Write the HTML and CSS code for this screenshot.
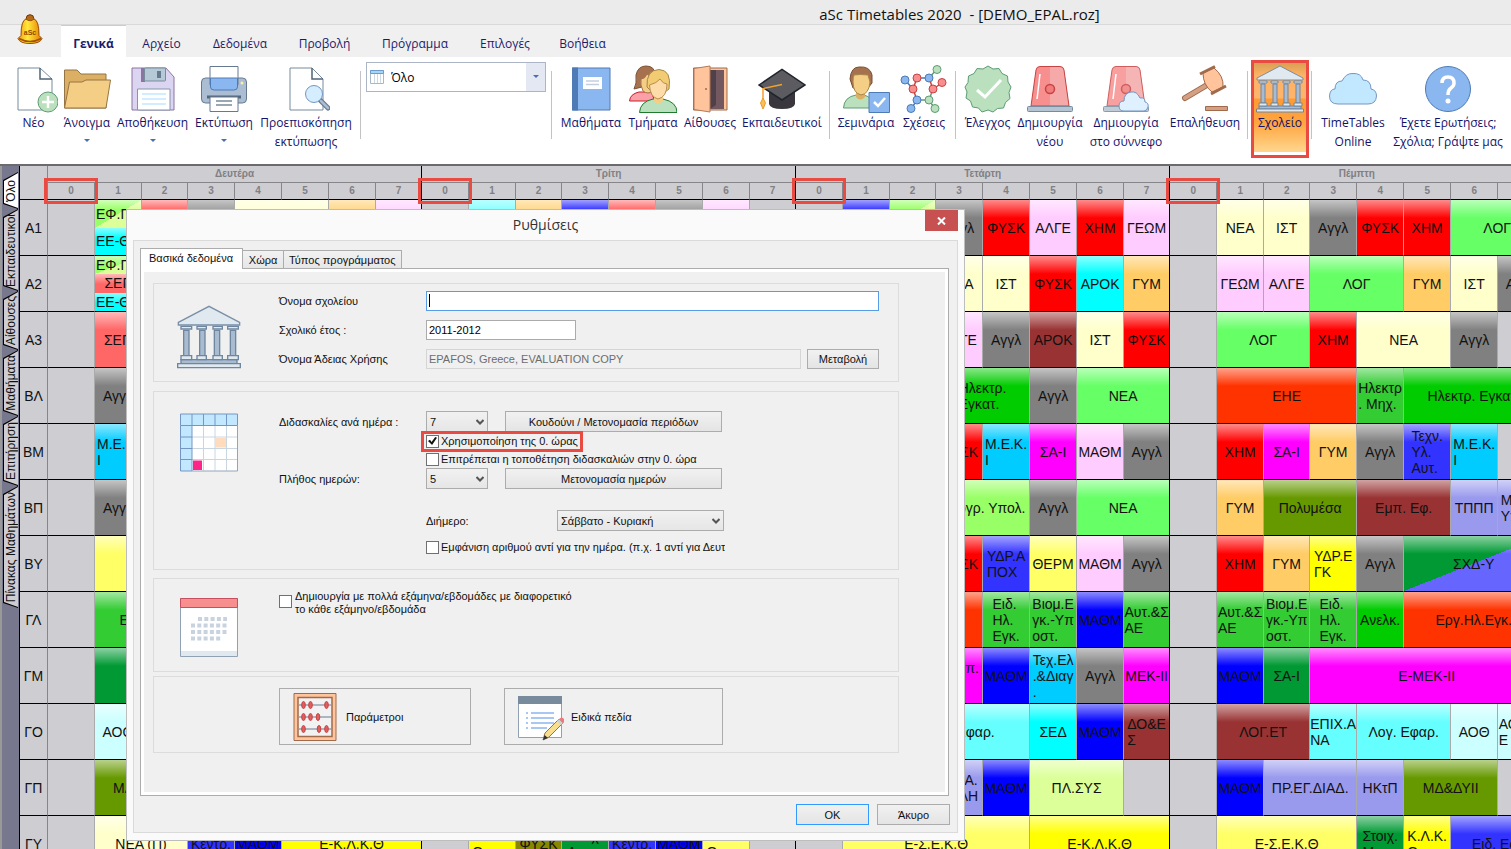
FILE: index.html
```html
<!DOCTYPE html>
<html lang="el">
<head>
<meta charset="utf-8">
<title>aSc Timetables 2020 - [DEMO_EPAL.roz]</title>
<link rel="stylesheet" href="styles.css">
</head>
<body>
<svg width="0" height="0" class="defs" aria-hidden="true">
  <defs>
    <symbol id="i-school" viewBox="0 0 48 48">
      <path d="M1 13 24 1 47 13V15H1Z" fill="#dfe9ef" stroke="#7a8fa6"/>
      <g fill="#a9bbcf" stroke="#6f86a0"><path d="M5 19H9V38H5ZM17 19H21V38H17ZM28 19H32V38H28ZM40 19H44V38H40Z"/><path d="M3 41H45V44H3Z"/></g>
      <g fill="#dfe9ef" stroke="#6f86a0"><path d="M3 16H11V18H3ZM15 16H22V18H15ZM27 16H34V18H27ZM38 16H46V18H38ZM3 38H11V41H3ZM15 38H22V41H15ZM27 38H34V41H27ZM38 38H46V41H38Z"/><path d="M.5 44H47.500V47H.5Z"/></g>
    </symbol>
    <symbol id="i-siren" viewBox="0 0 48 48">
      <path d="M5 41 10 5Q10.500 1.500 14 1.500H34Q37.500 1.500 38 5L43 41Z" fill="#f78f8f"/>
      <path d="M24 1.500H34Q37.500 1.500 38 5L43 41H24Z" fill="#f5a9a9"/>
      <path d="M5 41 10 5Q10.500 1.500 14 1.500H34Q37.500 1.500 38 5L43 41Z" fill="none" stroke="#c74343"/>
      <path d="M14 9 11 34" stroke="#fff" stroke-width="1.500"/>
      <circle cx="24" cy="24" r="4.500" fill="#f07c7c" stroke="#c74343" stroke-width="1.500"/>
      <rect x="1.500" y="41.500" width="45" height="5" rx="1" fill="#b5c4d2" stroke="#788b9c"/>
    </symbol>
    <symbol id="i-chev" viewBox="0 0 8 6"><path d="M.5 1 4 4.500 7.500 1" fill="none" stroke="#555" stroke-width="2"/></symbol>
  </defs>
</svg>

<header class="top">
  <div class="titlebar"><h1>aSc Timetables 2020 &nbsp;- [DEMO_EPAL.roz]</h1></div>
  <svg class="bell" viewBox="0 0 26 30">
    <defs><linearGradient id="gold"><stop offset="0" stop-color="#ef9a10"/><stop offset=".4" stop-color="#ffe93a"/><stop offset="1" stop-color="#e87a00"/></linearGradient></defs>
    <circle cx="13" cy="4" r="3.800" fill="#b46a16" stroke="#6c3606"/>
    <path d="M4 21Q4 6 9 4.500 13 8 17 4.500 22 6 22 21L25 24Q23 29 13 29T1 24Z" fill="url(#gold)" stroke="#9c4c04"/>
    <path d="M2 24Q13 30 24 24" fill="none" stroke="#a34f00" stroke-width="1.500"/>
    <text x="13" y="20" text-anchor="middle" class="bell-text">aSc</text>
  </svg>
  <nav class="menu">
    <button class="on">Γενικά</button><button>Αρχείο</button><button>Δεδομένα</button><button>Προβολή</button><button>Πρόγραμμα</button><button>Επιλογές</button><button>Βοήθεια</button>
  </nav>
</header>

<div class="ribbon" role="toolbar">
  <button><svg viewBox="0 0 48 48"><path d="M8 3H30L42 14V45H8Z" fill="#fff" stroke="#788b9c"/><path d="M30 3V14H42" fill="none" stroke="#4f6478" stroke-width="1.500"/><circle cx="38" cy="37" r="10" fill="#bae0bd" stroke="#5e9c76"/><path d="M38 31V43M32 37H44" stroke="#fff" stroke-width="2.500"/></svg><span>Νέο</span></button>
  <button><svg viewBox="0 0 48 48"><path d="M1.500 43V5H14L18 9H43V43Z" fill="#dbb065" stroke="#967444"/><path d="M1.500 43 6.500 17H19L23 15H47.500L43 43Z" fill="#f5ce85" stroke="#967444"/></svg><span>Άνοιγμα</span><i class="drop"></i></button>
  <button><svg viewBox="0 0 48 48"><path d="M3 3H37L45 12V45H3Z" fill="#dcd5f2" stroke="#8b75a1"/><path d="M12 3H16V17H12Z" fill="#8b75a1"/><rect x="15.500" y="3" width="21" height="13" rx="1" fill="#b6c9d6" stroke="#788b9c"/><path d="M28 6H32V13H28Z" fill="#66798f"/><path d="M8.500 24H41V45H8.500Z" fill="#fff" stroke="#8496a8"/><path d="M13 29H37M13 34H37M13 39H37" stroke="#c2e8ff" stroke-width="1.500"/></svg><span>Αποθήκευση</span><i class="drop"></i></button>
  <button><svg viewBox="0 0 48 48"><rect x="1.500" y="13" width="45" height="25" rx="4" fill="#aabdd2" stroke="#66798f"/><path d="M10 1.500H38V20H10Z" fill="#fff" stroke="#66798f"/><path d="M10.500 13H37.500V22Q37.500 25 34 25H14Q10.500 25 10.500 22Z" fill="#8bb7f0" stroke="#4e7ab5"/><circle cx="42" cy="18" r="1.500" fill="#ffeea3"/><path d="M7 32H41" stroke="#55677a" stroke-width="3"/><path d="M10 32H38V46.500H10Z" fill="#fff" stroke="#66798f"/><path d="M16 36H32M16 40H32" stroke="#788b9c" stroke-width="1.500"/></svg><span>Εκτύπωση</span><i class="drop"></i></button>
  <button><svg viewBox="0 0 48 48"><path d="M8 3H30L41 14V45H8Z" fill="#fff" stroke="#788b9c"/><path d="M30 3V14H41" fill="none" stroke="#4f6478" stroke-width="1.500"/><path d="M38 35 46 43" stroke="#66798f" stroke-width="5" stroke-linecap="round"/><path d="M39 36 46 43" stroke="#aabdd2" stroke-width="2.500" stroke-linecap="round"/><circle cx="32" cy="29" r="8.500" fill="#d4edff" stroke="#7496c4"/></svg><span>Προεπισκόπηση<br>εκτύπωσης</span></button>
  <i class="sep"></i>
  <div class="combo"><svg class="combo-ico" viewBox="0 0 14 14"><path d="M.5.5H13.500V13.500H.5Z" fill="#fff" stroke="#a9b8c8"/><path d="M.5.5H13.500V3.500H.5Z" fill="#a8d4f5" stroke="#6d9ccc"/><path d="M4.500 4V13M7.500 4V13M10.500 4V13" stroke="#ccd8e4"/></svg><select aria-label="Προβολή"><option>Όλο</option></select><i class="drop"></i></div>
  <i class="sep"></i>
  <button><svg viewBox="0 0 48 48"><path d="M5.500 3H43V45H5.500Z" fill="#8bb7f0" stroke="#4e7ab5"/><path d="M5 2.500H11V45.500H5Z" fill="#4e7ab5"/><path d="M16 12H35V24H16Z" fill="#fff"/><path d="M19 16H32M19 19.500H32" stroke="#c3cfe0" stroke-width="1.500"/></svg><span>Μαθήματα</span></button>
  <button><svg viewBox="0 0 48 48"><path d="M.5 36Q1 29 10 27H22L26 36Z" fill="#faa0a6" stroke="#c8202c"/><path d="M5 24Q8 19 7 10 9 1 17 1 26 1 26 10L22 25 13 22Z" fill="#a6714e" stroke="#7d5136"/><path d="M12 14Q16 14 18 9L24 14V26Q19 30 14 26Q11 20 12 14Z" fill="#f5ce85" stroke="#a6714e"/><path d="M10.500 47.500Q11 37 24 34H34Q48 37 48 47.500Z" fill="#bae0bd" stroke="#1f7a2e"/><path d="M25 30H34V36Q29 41 25 36Z" fill="#f5ce85"/><path d="M18 22Q17 5 30 4.500 43 5 40 24L36 27H23Z" fill="#f2cc72" stroke="#a6854a"/><path d="M20.500 20Q28 18 31 14 34 19 38 19 38 32 29 34 21 32 20.500 20Z" fill="#fddcaa" stroke="#b88e50"/></svg><span>Τμήματα</span></button>
  <button><svg viewBox="0 0 48 48"><path d="M7.500 3H41V45H7.500Z" fill="#ffc49c" stroke="#a16a4a"/><path d="M24 5H38V44H24Z" fill="#73595f"/><path d="M24 5H30V40L24 44Z" fill="#50404a"/><path d="M8 3.500 24 1V47L8 44.500Z" fill="#ffc49c" stroke="#b57a58"/><circle cx="20" cy="24" r="1" fill="#a16a4a"/></svg><span>Αίθουσες</span></button>
  <button><svg viewBox="0 0 48 48"><path d="M11 25H37V39Q36 44 24 44T11 39Z" fill="#39373d"/><path d="M1 20 24 4.500 47 20 24 35Z" fill="#5c5c60" stroke="#20242e" stroke-width="1.500"/><path d="M24 19.500 5 23.500V34" fill="none" stroke="#f5a02a" stroke-width="1.500"/><path d="M5 33 7.500 38 5 44 2.500 38Z" fill="#f9c15c" stroke="#ef9a22"/></svg><span>Εκπαιδευτικοί</span></button>
  <i class="sep"></i>
  <button><svg viewBox="0 0 48 48"><path d="M1.500 43Q2 32 14 30H22Q31 32 31 43Z" fill="#bae0bd" stroke="#5e9c76"/><path d="M14 26H23V32Q18 37 14 32Z" fill="#dbb065"/><path d="M8 14Q9 2 17 2 28 1 30 10V18L26 23H11Z" fill="#a6714e" stroke="#7a4f34"/><path d="M11 17Q11 12 12 10 18 9 26 10L28 17Q27 29 19 30 11 28 11 17Z" fill="#f5ce85" stroke="#a6854a"/><path d="M27 27.500H47.500V47.500H27Z" fill="#8bb7f0" stroke="#4e7ab5"/><path d="M32 37 36 41 43 33" fill="none" stroke="#fff" stroke-width="2.500"/></svg><span>Σεμινάρια</span></button>
  <button><svg viewBox="0 0 48 48"><g fill="none" stroke-width="1.500"><path d="M17 13 13 24 17 35M33 24 42 18M33 24 29 13" stroke="#c74343"/><path d="M17 13H29M5 15 13 24M17 35 11 44" stroke="#4e7ab5"/><path d="M29 13 37 4M17 35H29L33 24M29 35 35 44" stroke="#5e9c76"/></g><g fill="#f78f8f" stroke="#c74343"><circle cx="17" cy="13" r="4"/><circle cx="13" cy="24" r="4"/><circle cx="33" cy="24" r="4"/><circle cx="42" cy="17.500" r="4"/></g><g fill="#8bb7f0" stroke="#4e7ab5"><circle cx="5" cy="15" r="4"/><circle cx="29" cy="13" r="4"/><circle cx="17" cy="35" r="4"/><circle cx="11" cy="43.500" r="4"/></g><g fill="#bae0bd" stroke="#5e9c76"><circle cx="37" cy="4.500" r="4"/><circle cx="29" cy="35" r="4"/><circle cx="35" cy="43.500" r="4"/></g></svg><span>Σχέσεις</span></button>
  <i class="sep"></i>
  <button><svg viewBox="0 0 48 48"><path d="M24 1 29 4 35 3.500 38 8.500 43.500 11 44 17 47 22 45 27.500 46 33.500 41.500 37.500 39.500 43 33.500 43.500 29 47 24 45 18 47 14.500 43 8.500 42 6.500 36 2 33 3 27 1 22 4 17.500 4.500 11 10 8.500 13 3.500 19 4Z" fill="#bae0bd" stroke="#5e9c76"/><path d="M13 25 21 32 37 15" fill="none" stroke="#fff" stroke-width="3"/></svg><span>Έλεγχος</span></button>
  <button><svg viewBox="0 0 48 48"><use href="#i-siren"/></svg><span>Δημιουργία<br>νέου</span></button>
  <button><svg viewBox="0 0 48 48"><use href="#i-siren" opacity=".85"/><path d="M22 46Q17 46 17 41T22 36Q22 28 29 27 35 26 38 33 43 32 43 37 47 38 46 42 45 46 42 46Z" fill="#dff0fe" stroke="#7496c4"/></svg><span>Δημιουργία<br>στο σύννεφο</span></button>
  <button><svg viewBox="0 0 48 48"><path d="M4 33 26 20" stroke="#a16a4a" stroke-width="6" stroke-linecap="round"/><path d="M4 33 26 20" stroke="#d3a084" stroke-width="4" stroke-linecap="round"/><path d="M22 8 33 3Q43 11 42 22L31 27Q22 20 22 8Z" fill="#ffc49c" stroke="#a16a4a"/><path d="M19 9 34 1.500M30 29 45 21" stroke="#a16a4a" stroke-width="3"/><path d="M24.500 41.500H46.500V45.500H24.500Z" fill="#d3a084" stroke="#a16a4a"/></svg><span>Επαλήθευση</span></button>
  <i class="sep"></i>
  <button class="active"><svg viewBox="0 0 48 48"><use href="#i-school"/></svg><span>Σχολείο</span></button>
  <i class="sep"></i>
  <button><svg viewBox="0 0 48 48"><path d="M9 39Q.5 39 .5 31 1 24 6 24 6 16 13 16 17 8 24 8.500 32 8 34 15 42 15 42 24 47.500 25 47.500 31 47 39 39 39Z" fill="#c2e8ff" stroke="#7496c4"/></svg><span>TimeTables<br>Online</span></button>
  <button><svg viewBox="0 0 48 48"><circle cx="24" cy="24" r="22.500" fill="#8bb7f0" stroke="#4e7ab5"/><path d="M18 18Q18 12 24 12T30 18Q30 21 27 23T24 30" fill="none" stroke="#fff" stroke-width="3.500"/><circle cx="24" cy="36" r="2.500" fill="#fff"/></svg><span>Έχετε Ερωτήσεις;<br>Σχόλια; Γράψτε μας</span></button>
</div>

<main class="work">
  <nav class="side">
    <button class="t1 on"><span>Όλο</span></button><button class="t2"><span>Εκπαιδευτικοί</span></button><button class="t3"><span>Αίθουσες</span></button><button class="t4"><span>Μαθήματα</span></button><button class="t5"><span>Επιτήρηση</span></button><button class="t6"><span>Πίνακας Μαθημάτων</span></button>
  </nav>
  <div class="grid-wrap">
  <table class="tt">
    <colgroup><col class="h"><col><col><col class="n"><col><col><col><col><col class="n"><col><col><col class="n"><col><col><col><col><col class="n"><col><col><col class="n"><col><col><col><col><col class="n"><col><col><col class="n"><col><col><col><col><col class="n"></colgroup>
    <thead>
      <tr><th rowspan="2"></th><th colspan="8" class="e">Δευτέρα</th><th colspan="8" class="e">Τρίτη</th><th colspan="8" class="e">Τετάρτη</th><th colspan="8" class="e">Πέμπτη</th></tr>
      <tr><th class="z">0</th><th>1</th><th>2</th><th>3</th><th>4</th><th>5</th><th>6</th><th class="e">7</th><th class="z">0</th><th>1</th><th>2</th><th>3</th><th>4</th><th>5</th><th>6</th><th class="e">7</th><th class="z">0</th><th>1</th><th>2</th><th>3</th><th>4</th><th>5</th><th>6</th><th class="e">7</th><th class="z">0</th><th>1</th><th>2</th><th>3</th><th>4</th><th>5</th><th>6</th><th class="e"></th></tr>
    </thead>
    <tbody>
      <tr><th>Α1</th><td></td><td><div class="stack"><b class="duo">ΕΦ.ΓΛ</b><b class="cyan">ΕΕ-Θ</b></div></td><td><div class="stack"><b class="coral mid">ΣΕΠ</b><b class="coral"></b></div></td><td class="gray"></td><td colspan="2" class="cream"></td><td class="orange"></td><td class="pink e"></td>
        <td></td><td class="aqua"></td><td class="orange"></td><td><div class="stack"><b class="indigo mid">ΕΠ</b><b class="indigo"></b></div></td><td><div class="stack"><b class="coral mid">ΣΕΠ</b><b class="coral"></b></div></td><td class="gray"></td><td class="pink"></td><td class="e"></td>
        <td></td><td><div class="stack"><b class="indigo mid">ΕΠ</b><b class="indigo"></b></div></td><td><div class="stack"><b class="duo">ΕΦ.ΓΛ</b><b class="cyan"></b></div></td><td class="gray">Αγγλ</td><td class="red">ΦΥΣΚ</td><td class="pink">ΑΛΓΕ</td><td class="red">ΧΗΜ</td><td class="pink e">ΓΕΩΜ</td>
        <td></td><td class="cream">ΝΕΑ</td><td class="cream">ΙΣΤ</td><td class="gray">Αγγλ</td><td class="red">ΦΥΣΚ</td><td class="red">ΧΗΜ</td><td colspan="2" class="lime e">ΛΟΓ</td></tr>
      <tr><th>Α2</th><td></td><td><div class="stack"><b class="duo">ΕΦ.ΓΛ</b><b class="coral mid">ΣΕΠ</b><b class="cyan">ΕΕ-Θ</b></div></td><td colspan="6" class="e"></td><td colspan="8" class="e"></td>
        <td></td><td></td><td></td><td class="cream">ΝΕΑ</td><td class="cream">ΙΣΤ</td><td class="red">ΦΥΣΚ</td><td class="cyan">ΑΡΟΚ</td><td class="orange e">ΓΥΜ</td>
        <td></td><td class="pink">ΓΕΩΜ</td><td class="pink">ΑΛΓΕ</td><td colspan="2" class="lime">ΛΟΓ</td><td class="orange">ΓΥΜ</td><td class="cream">ΙΣΤ</td><td class="gray e">Αγγλ</td></tr>
      <tr><th>Α3</th><td></td><td class="coral">ΣΕΠ</td><td colspan="6" class="e"></td><td colspan="8" class="e"></td>
        <td></td><td></td><td></td><td class="pink">ΑΛΓΕ</td><td class="gray">Αγγλ</td><td class="brown">ΑΡΟΚ</td><td class="cream">ΙΣΤ</td><td class="red e">ΦΥΣΚ</td>
        <td></td><td colspan="2" class="lime">ΛΟΓ</td><td class="red">ΧΗΜ</td><td colspan="2" class="cream">ΝΕΑ</td><td class="gray">Αγγλ</td><td class="e"></td></tr>
      <tr><th>ΒΛ</th><td></td><td class="gray">Αγγλ</td><td colspan="6" class="e"></td><td colspan="8" class="e"></td>
        <td></td><td></td><td></td><td colspan="2" class="green"><span>Ηλεκτρ.<br>Εγκατ.</span></td><td class="gray">Αγγλ</td><td colspan="2" class="lime e">ΝΕΑ</td>
        <td></td><td colspan="3" class="fire">ΕΗΕ</td><td class="kelly"><span>Ηλεκτρ<br>. Μηχ.</span></td><td colspan="3" class="green e">Ηλεκτρ. Εγκατ.</td></tr>
      <tr><th>ΒΜ</th><td></td><td class="sky"><span>Μ.Ε.Κ.<br>Ι</span></td><td colspan="6" class="e"></td><td colspan="8" class="e"></td>
        <td></td><td></td><td></td><td class="red">ΦΥΣΚ</td><td class="sky"><span>Μ.Ε.Κ.<br>Ι</span></td><td class="magenta">ΣΑ-Ι</td><td class="pink">ΜΑΘΜ</td><td class="gray e">Αγγλ</td>
        <td></td><td class="red">ΧΗΜ</td><td class="magenta">ΣΑ-Ι</td><td class="orange">ΓΥΜ</td><td class="gray">Αγγλ</td><td class="indigo"><span>Τεχν.<br>Υλ.<br>Αυτ.</span></td><td class="sky"><span>Μ.Ε.Κ.<br>Ι</span></td><td class="e"></td></tr>
      <tr><th>ΒΠ</th><td></td><td class="gray">Αγγλ</td><td colspan="6" class="e"></td><td colspan="8" class="e"></td>
        <td></td><td></td><td></td><td colspan="2" class="apple">Προγρ. Υπολ.</td><td class="gray">Αγγλ</td><td colspan="2" class="lime e">ΝΕΑ</td>
        <td></td><td class="orange">ΓΥΜ</td><td colspan="2" class="olive">Πολυμέσα</td><td colspan="2" class="brown">Εμπ. Εφ.</td><td class="lav">ΤΠΠΠ</td><td class="lav e"><span>Μηχ.Ε<br>Υπολ.</span></td></tr>
      <tr><th>ΒΥ</th><td></td><td colspan="2" class="lemon"></td><td colspan="5" class="e"></td><td colspan="8" class="e"></td>
        <td></td><td></td><td></td><td class="red">ΦΥΣΚ</td><td class="indigo"><span>ΥΔΡ.Α<br>ΠΟΧ</span></td><td class="lemon">ΘΕΡΜ</td><td class="pink">ΜΑΘΜ</td><td class="gray e">Αγγλ</td>
        <td></td><td class="red">ΧΗΜ</td><td class="orange">ΓΥΜ</td><td class="yellow"><span>ΥΔΡ.Ε<br>ΓΚ</span></td><td class="gray">Αγγλ</td><td colspan="3" class="half e">ΣΧΔ-Υ</td></tr>
      <tr><th>ΓΛ</th><td></td><td colspan="2" class="kelly">Ε-ΗΕΚ</td><td colspan="5" class="e"></td><td colspan="8" class="e"></td>
        <td></td><td></td><td colspan="2" class="fire"></td><td class="kelly"><span>Ειδ.<br>Ηλ.<br>Εγκ.</span></td><td class="kelly"><span>Βιομ.Ε<br>γκ.-Υπ<br>οστ.</span></td><td class="blue">ΜΑΘΜ</td><td class="kelly e"><span>Αυτ.&amp;Σ<br>ΑΕ</span></td>
        <td></td><td class="kelly"><span>Αυτ.&amp;Σ<br>ΑΕ</span></td><td class="kelly"><span>Βιομ.Ε<br>γκ.-Υπ<br>οστ.</span></td><td class="kelly"><span>Ειδ.<br>Ηλ.<br>Εγκ.</span></td><td class="green">Ανελκ.</td><td colspan="3" class="fire e">Εργ.Ηλ.Εγκ.</td></tr>
      <tr><th>ΓΜ</th><td></td><td colspan="2" class="forest"></td><td colspan="5" class="e"></td><td colspan="8" class="e"></td>
        <td></td><td></td><td></td><td class="magenta"><span>Εφ.Ιπ.<br>&nbsp;</span></td><td class="blue">ΜΑΘΜ</td><td class="sky"><span>Τεχ.Ελ<br>.&amp;Διαγ<br>.</span></td><td class="gray">Αγγλ</td><td class="magenta e">ΜΕΚ-ΙΙ</td>
        <td></td><td class="blue">ΜΑΘΜ</td><td class="forest">ΣΑ-Ι</td><td colspan="5" class="magenta e">Ε-ΜΕΚ-ΙΙ</td></tr>
      <tr><th>ΓΟ</th><td></td><td class="ice">ΑΟΘ</td><td colspan="6" class="e"></td><td colspan="8" class="e"></td>
        <td></td><td></td><td colspan="3" class="aqua">Λογ. Εφαρ.</td><td class="cyan">ΣΕΔ</td><td class="blue">ΜΑΘΜ</td><td class="brown e"><span>ΔΟ&amp;Ε<br>Σ</span></td>
        <td></td><td colspan="2" class="brown">ΛΟΓ.ΕΤ</td><td class="aqua"><span>ΕΠΙΧ.Α<br>ΝΑ</span></td><td colspan="2" class="aqua">Λογ. Εφαρ.</td><td class="ice">ΑΟΘ</td><td class="ice e"><span>ΑΟΘ.Ε<br>Ε</span></td></tr>
      <tr><th>ΓΠ</th><td></td><td colspan="2" class="olive">ΜΔ&amp;ΔΥΙΙ</td><td colspan="5" class="e"></td><td colspan="8" class="e"></td>
        <td></td><td></td><td></td><td class="lav"><span>ΕΦ.Α.<br>ΕΛΛΗ</span></td><td class="blue">ΜΑΘΜ</td><td colspan="2" class="pear">ΠΛ.ΣΥΣ</td><td class="e"></td>
        <td></td><td class="blue">ΜΑΘΜ</td><td colspan="2" class="lav">ΠΡ.ΕΓ.ΔΙΑΔ.</td><td class="lav">ΗΚτΠ</td><td colspan="2" class="olive">ΜΔ&amp;ΔΥΙΙ</td><td class="e"></td></tr>
      <tr><th>ΓΥ</th><td></td><td colspan="2" class="cream">ΝΕΑ (Π)</td><td class="indigo">Κεντρ.</td><td class="blue">ΜΑΘΜ</td><td colspan="3" class="yellow e">Ε-Κ.Λ.Κ.Θ</td>
        <td></td><td class="yellow"><span>Κ.Λ.Κ.<br>Θ</span></td><td class="khaki">ΦΥΣΚ</td><td class="forest"><span>Στοιχ.<br>Λ</span></td><td class="indigo">Κεντρ.</td><td class="blue">ΜΑΘΜ</td><td class="lemon"><span>Σ.Ε.Κ.<br>Θ</span></td><td class="e"></td>
        <td></td><td colspan="4" class="lemon">Ε-Σ.Ε.Κ.Θ</td><td colspan="3" class="yellow e">Ε-Κ.Λ.Κ.Θ</td>
        <td></td><td colspan="3" class="lemon">Ε-Σ.Ε.Κ.Θ</td><td class="forest"><span>Στοιχ.<br>Μηχ.</span></td><td class="yellow"><span>Κ.Λ.Κ.<br>Θ</span></td><td colspan="2" class="indigo e">Ειδ. Εφ.</td></tr>
    </tbody>
  </table>
  </div>
</main>

<section class="dialog" role="dialog" aria-labelledby="dlg-title">
  <header class="dlg-head"><h2 id="dlg-title">Ρυθμίσεις</h2><button class="close" aria-label="Κλείσιμο"><svg viewBox="0 0 9 8"><path d="M1 .5 8 7.500M8 .5 1 7.500" stroke="#fff" stroke-width="2"/></svg></button></header>
  <div class="dlg-body">
    <div class="tabs" role="tablist"><button role="tab" class="on">Βασικά δεδομένα</button><button role="tab">Χώρα</button><button role="tab">Τύπος προγράμματος</button></div>
    <div class="pane">
      <fieldset class="g1">
        <svg class="ico big" viewBox="0 0 48 48"><use href="#i-school"/></svg>
        <div class="rows">
          <div class="row"><label for="f1">Όνομα σχολείου</label><span class="field caret"><input id="f1" type="text" class="focus"></span></div>
          <div class="row"><label for="f2">Σχολικό έτος :</label><input id="f2" type="text" class="short" value="2011-2012"></div>
          <div class="row"><label for="f3">Όνομα Άδειας Χρήσης</label><span class="field"><input id="f3" type="text" disabled value="EPAFOS, Greece, EVALUATION COPY"><button class="btn">Μεταβολή</button></span></div>
        </div>
      </fieldset>
      <fieldset class="g2">
        <svg class="ico" viewBox="0 0 58 58"><path d="M.5.5H57.500V57.500H.5Z" fill="#fff"/><path d="M.5.5H57.500V12H12V57.500H.5Z" fill="#c2e8ff"/><path d="M35.500 24.500H46V34H35.500Z" fill="#ffdcbe"/><path d="M13 47H22V56.500H13Z" fill="#ff2487"/><path d="M23.500 12V57M35 12V57M46.500 12V57M12 23.500H57M12 35H57M12 46H57" stroke="#c9d6e2"/><path d="M.5.5H57.500V12H.5ZM.5 12V57.500H12V.5M23.500.5V12M35 .5V12M46.500.5V12M.5 23.500H12M.5 35H12M.5 46H12" fill="none" stroke="#7496c4"/><path d="M57.500 12V57.500H12" fill="none" stroke="#93a5b8"/></svg>
        <div class="rows">
          <div class="row"><label for="s1">Διδασκαλίες ανά ημέρα :</label><span class="field wide"><span class="sel"><select id="s1"><option>7</option></select><svg><use href="#i-chev"/></svg></span><button class="btn">Κουδούνι / Μετονομασία περιόδων</button></span></div>
          <div class="check"><label class="marked"><input type="checkbox" checked>Χρησιμοποίηση της 0. ώρας</label></div>
          <div class="check"><label><input type="checkbox">Επιτρέπεται η τοποθέτηση διδασκαλιών στην 0. ώρα</label></div>
          <div class="row"><label for="s2">Πλήθος ημερών:</label><span class="field wide"><span class="sel"><select id="s2"><option>5</option></select><svg><use href="#i-chev"/></svg></span><button class="btn">Μετονομασία ημερών</button></span></div>
          <div class="row weekend"><i></i><span class="field"><label for="s3">Διήμερο:</label><span class="sel long"><select id="s3"><option>Σάββατο - Κυριακή</option></select><svg><use href="#i-chev"/></svg></span></span></div>
          <div class="check clip"><label><input type="checkbox">Εμφάνιση αριθμού αντί για την ημέρα. (π.χ. 1 αντί για Δευτ</label></div>
        </div>
      </fieldset>
      <fieldset class="g3">
        <svg class="ico" viewBox="0 0 58 59"><path d="M.5.5H57.500V58.500H.5Z" fill="#fff" stroke="#8fa1b3"/><path d="M1 53H57V58H1Z" fill="#dfe9ef"/><path d="M.5.5H57.500V9.500H.5Z" fill="#f78f8f" stroke="#c75060"/><g stroke="#c8d3df" stroke-width="4" stroke-dasharray="4 2.300"><path d="M18 21H47M11 27.500H47M11 34H47M11 40.500H41"/></g></svg>
        <label class="multi"><input type="checkbox"><span>Δημιουργία με πολλά εξάμηνα/εβδομάδες με διαφορετικό<br>το κάθε εξάμηνο/εβδομάδα</span></label>
      </fieldset>
      <fieldset class="g4">
        <button class="tile"><svg viewBox="0 0 48 48"><path d="M3 .5H45V47.500H3Z" fill="#ffc49c" stroke="#a16a4a"/><path d="M7 4.500H41V43.500H7Z" fill="#f2f2f2" stroke="#a16a4a" stroke-width="1.500"/><path d="M8 12H40M8 24H40M8 36H40" stroke="#66798f"/><g fill="#e05f5f" stroke="#c74343"><ellipse cx="12.500" cy="12" rx="1.800" ry="3.500"/><ellipse cx="19.500" cy="12" rx="1.800" ry="3.500"/><ellipse cx="35.500" cy="12" rx="1.800" ry="3.500"/><ellipse cx="12.500" cy="24" rx="1.800" ry="3.500"/><ellipse cx="19.500" cy="24" rx="1.800" ry="3.500"/><ellipse cx="27" cy="24" rx="1.800" ry="3.500"/><ellipse cx="12.500" cy="36" rx="1.800" ry="3.500"/><ellipse cx="28" cy="36" rx="1.800" ry="3.500"/><ellipse cx="35.500" cy="36" rx="1.800" ry="3.500"/></g></svg><span>Παράμετροι</span></button>
        <button class="tile wide"><svg viewBox="0 0 48 48"><path d="M2.500 3.500H45.500V44.500H2.500Z" fill="#fff" stroke="#8fa1b3"/><path d="M2 3H46V11H2Z" fill="#788b9c"/><path d="M10 20H12M10 25H12M10 30H12M10 35H12M15 20H38M15 25H38M15 30H38M15 35H31" stroke="#8bb7f0" stroke-width="1.500"/><path d="M27 47 29 40 43 26 47 30 33 44Z" fill="#f7df8e" stroke="#967444"/><path d="M27 47 28.500 42 32 45Z" fill="#333"/><path d="M41 28 43 26 47 30 45 32Z" fill="#c5d4e3"/><path d="M43 26Q46 23 48 26T47 30Z" fill="#f07878"/></svg><span>Ειδικά πεδία</span></button>
      </fieldset>
    </div>
    <footer class="dlg-foot"><button class="btn ok">OK</button><button class="btn">Άκυρο</button></footer>
  </div>
</section>
</body>
</html>
```
FILE: styles.css
```css
* { box-sizing: border-box; }
html, body { height: 100%; }
body { margin: 0; display: flex; flex-direction: column; position: relative; overflow: hidden; background: #cecdd2; font-family: "Liberation Sans", Arial, sans-serif; font-size: 11px; color: #111; }
button { font: inherit; color: inherit; border: 0; padding: 0; background: none; }
h1, h2 { margin: 0; font-weight: 400; }
.defs { position: absolute; }

/* Title and menu */
.top { position: relative; flex: none; font-family: "Open Sans", "Noto Sans", sans-serif; }
.titlebar { height: 25px; background: #ebebeb; border-bottom: 1px solid #d9d9d9; padding-top: 4px; padding-left: 408px; text-align: center; }
.titlebar h1 { font-size: 15px; line-height: 20px; color: #111; }
.bell { position: absolute; left: 17px; top: 14px; width: 26px; height: 31px; }
.bell-text { font: bold 7px "Liberation Sans", sans-serif; fill: #8b4a00; }
.menu { height: 32px; background: #f0f0f0; padding-left: 61px; display: grid; grid-template-columns: 65px 71px 86px 83px 98px 82px 73px; }
.menu button { font-size: 12px; color: #1b1b6d; padding-top: 4px; }
.menu .on { background: #fff; font-weight: 700; border-top: 1px solid #ccc; }

/* Ribbon */
.ribbon { flex: none; height: 109px; background: #fff; border-bottom: 2px solid #6c6a6e; padding-left: 8px; display: grid; align-items: start; grid-template-columns: 51px 56px 75px 68px 96px 12px 180px 11px 68px 56px 58px 86px 9px 64px 52px 10px 55px 70px 82px 76px 8px 58px 5px 78px 112px; font-family: "Open Sans", "Noto Sans", sans-serif; }
.ribbon button { padding-top: 8px; display: flex; flex-direction: column; align-items: center; font-size: 12px; line-height: 19px; color: #12126b; white-space: nowrap; position: relative; }
.ribbon button svg { width: 48px; height: 48px; display: block; }
.drop { border: 3px solid transparent; border-top-color: #4a6fb0; border-bottom: 0; margin-top: 7px; }
.sep { width: 1px; height: 68px; margin-top: 14px; background: #c3c3c3; justify-self: center; }
.ribbon .active { background: linear-gradient(#d99f54 0, #fdb264 12px, #ffb46c 35px, #ff9b33 36px, #ffa53e 60px, #ffd58c 88px) 3px 6px / 52px 89px no-repeat; height: 100px; }
.ribbon .active::after { content: ""; position: absolute; inset: 3px 0 -1px 0; border: 3px solid #e94b43; }
.combo { margin-top: 5px; height: 30px; border: 1px solid #abb5c6; position: relative; display: flex; background: linear-gradient(90deg, #fff 159px, #e4e8f2 159px); }
.combo select { flex: 1; appearance: none; border: 0; background: none; font: 12px "Open Sans", sans-serif; padding-left: 24px; }
.combo-ico { position: absolute; left: 3px; top: 7px; width: 14px; height: 14px; }
.combo .drop { position: absolute; right: 6px; top: 12px; margin: 0; }

/* Work area */
.work { flex: 1; min-height: 0; display: flex; overflow: hidden; }
.side { flex: none; width: 20px; padding: 6px 1px 0 1px; background: #77778d; border-left: 2px solid #999; border-right: 1px solid #000; display: flex; flex-direction: column; }
.side button { position: relative; background: #000; clip-path: polygon(100% 0, 100% 100%, 0 calc(100% - 5px), 0 8px); display: flex; align-items: center; justify-content: center; flex: none; }
.side button::before { content: ""; position: absolute; inset: 1px 0 1px 1px; background: #cecdd2; clip-path: polygon(100% 0, 100% 100%, 0 calc(100% - 5px), 0 8px); }
.side .on::before { background: #fff; }
.side span { position: relative; writing-mode: vertical-rl; transform: rotate(180deg); font-size: 12px; line-height: 14px; white-space: nowrap; }
.t1 { height: 37px; } .t2 { height: 82px; } .t3 { height: 59px; } .t4 { height: 66px; } .t5 { height: 70px; } .t6 { height: 122px; }
.grid-wrap { flex: 1; min-width: 0; overflow: hidden; }
.tt { table-layout: fixed; width: 1524px; border-collapse: separate; border-spacing: 0; font-size: 14px; line-height: 16px; }
.tt col { width: 47px; } .tt .n { width: 46px; } .tt .h { width: 28px; }
.tt th, .tt td { padding: 0; white-space: nowrap; text-align: center; border-right: 1px solid #aaa; border-bottom: 1px solid #000; overflow: hidden; }
.tt th { font-weight: 400; border-right-color: #85858a; }
.tt thead th { height: 17px; font-size: 10px; line-height: 14px; font-weight: 700; color: #808084; border-bottom-color: #85858a; }
.tt thead tr + tr th, .tt thead th[rowspan] { border-bottom-color: #000; }
.tt td, .tt tbody th { height: 56px; }
.tt .e, .tt thead .e { border-right-color: #000; }
.tt td { background-color: #cecdd2; background-image: linear-gradient(rgba(255,255,255,.55), rgba(255,255,255,0) 18px); }
.tt td:empty { background-image: none; }
.tt td span { display: inline-block; text-align: left; }
.tt .z { position: relative; overflow: visible; }
.tt .z::after { content: ""; position: absolute; inset: -5px -4px -5px -4px; border: 3px solid #e94b43; z-index: 1; }
.stack { height: 55px; display: grid; grid-auto-rows: 1fr; }
.stack b { font-weight: 400; text-align: left; padding-left: 1px; overflow: hidden; display: flex; align-items: center; background-image: linear-gradient(rgba(255,255,255,.55), rgba(255,255,255,0) 10px); }
.stack .mid { justify-content: center; }
.stack .duo { background: linear-gradient(rgba(255,255,255,.55), rgba(255,255,255,0) 10px), linear-gradient(to bottom right, #9f6 50%, #df9 50%); }
.tt .red { background-color: #f00; } .tt .coral { background-color: #f66; } .tt .gray { background-color: #808080; }
.tt .cream { background-color: #ffc; } .tt .orange { background-color: #fc6; } .tt .pink { background-color: #fcf; }
.tt .cyan { background-color: #0ff; } .tt .blue { background-color: #00f; } .tt .brown { background-color: #933; }
.tt .lime { background-color: #6f6; } .tt .green { background-color: #0c0; } .tt .kelly { background-color: #3c3; }
.tt .forest { background-color: #093; } .tt .sky { background-color: #0cf; } .tt .magenta { background-color: #f0f; }
.tt .indigo { background-color: #33f; } .tt .lav { background-color: #99e; } .tt .olive { background-color: #690; }
.tt .yellow { background-color: #ff0; } .tt .lemon { background-color: #ff6; } .tt .aqua { background-color: #6ff; }
.tt .ice { background-color: #cff; } .tt .fire { background-color: #f30; } .tt .apple { background-color: #9f6; }
.tt .pear { background-color: #df9; } .tt .khaki { background-color: #880; }
.tt .half { background-image: linear-gradient(rgba(255,255,255,.55), rgba(255,255,255,0) 18px), linear-gradient(to bottom right, #093 50%, #66f 50%); }
.tt td[class]:not(.e):empty, .tt .pink.e { background-image: linear-gradient(rgba(255,255,255,.55), rgba(255,255,255,0) 18px); }

/* Dialog */
.dialog { position: absolute; left: 126px; top: 209px; width: 839px; padding: 0 6px 7px; background: #fafafa; border: 1px solid #bdbdbd; z-index: 2; }
.dlg-head { height: 30px; display: flex; align-items: flex-start; }
.dlg-head h2 { flex: 1; padding-left: 33px; text-align: center; font: 14px/30px "Open Sans", "Noto Sans", sans-serif; color: #333; }
.close { width: 33px; height: 21px; background: #c75050; }
.close svg { width: 9px; height: 8px; }
.dlg-body { border: 1px solid #dadada; background: #f0f0f0; padding: 7px 8px 7px 6px; }
.tabs { display: flex; align-items: flex-end; height: 20px; }
.tabs button { height: 18px; border: 1px solid #acacac; border-bottom: 0; padding: 0 5px; background: linear-gradient(#f2f2f2, #e6e6e6); margin-right: -1px; position: relative; min-width: 42px; }
.tabs button:last-child { min-width: 118px; }
.tabs .on { height: 21px; padding: 0 9px 3px 8px; background: #fff; margin-bottom: -1px; z-index: 1; }
.pane { border: 1px solid #acacac; background: #f0f0f0; box-shadow: inset 0 0 0 3px #fff; padding: 14px 49px 42px 12px; display: flex; flex-direction: column; }
fieldset { margin: 0; border: 1px solid #dcdcdc; min-width: 0; padding: 7px 19px 12px 0; display: grid; grid-template-columns: 125px 1fr; }
.ico { width: 58px; height: 59px; margin-left: 26px; }
.ico.big { width: 64px; height: 64px; margin-left: 23px; align-self: end; }
.rows { display: flex; flex-direction: column; min-width: 0; }
.row { display: grid; grid-template-columns: 147px 1fr; align-items: center; }
.field { display: flex; align-items: center; position: relative; }
.g1 .rows { gap: 9px; }
.g1 .row { height: 20px; }
.g1 input { width: 100%; height: 20px; border: 1px solid #ababab; background: #fff; padding: 0 2px; font: inherit; }
.g1 .short { width: 150px; }
.g1 .focus { border-color: #569de5; }
.g1 input:disabled { background: #f0f0f0; border-color: #d5d5d5; color: #6d6d6d; }
.g1 .field { gap: 6px; }
.g1 .btn { flex: none; width: 72px; }
.caret::before { content: ""; position: absolute; left: 3px; top: 3px; width: 1px; height: 13px; background: #000; }
.btn { height: 20px; border: 1px solid #acacac; background: linear-gradient(#f1f1f1, #e4e4e4); white-space: nowrap; }
.g2 { margin-top: 9px; padding: 19px 0 13px; }
.g2 .ico { margin-top: 2px; }
.g2 .row { height: 21px; }
.g2 .field .btn { width: 217px; height: 21px; margin-left: 17px; }
.sel { position: relative; width: 62px; display: block; }
.sel select { appearance: none; width: 100%; height: 21px; border: 1px solid #acacac; border-radius: 0; background: linear-gradient(#f1f1f1, #e6e6e6); padding: 0 3px; font: inherit; color: inherit; display: block; }
.sel svg { position: absolute; right: 4px; top: 8px; width: 8px; height: 6px; }
.sel.long { width: 167px; }
.check { height: 18px; margin-left: 147px; display: flex; align-items: center; white-space: nowrap; }
.check label { display: flex; align-items: center; gap: 2px; position: relative; }
.marked::after { content: ""; position: absolute; inset: -4px -5px; border: 3px solid #e94b43; }
input[type=checkbox] { appearance: none; flex: none; width: 13px; height: 13px; margin: 0; border: 1px solid #707070; background: #fff; position: relative; }
input[type=checkbox]:checked::before { content: ""; position: absolute; inset: 1px; background: #111; clip-path: polygon(0 50%, 22% 35%, 40% 60%, 80% 5%, 100% 15%, 45% 95%); }
.weekend { margin-top: 21px; }
.weekend label { width: 131px; }
.clip { margin-top: 7px; width: 299px; overflow: hidden; }
.g3 { margin-top: 8px; padding: 11px 0 14px; }
.g3 .ico { margin-top: 8px; }
.multi { display: flex; gap: 3px; align-items: flex-start; line-height: 13px; }
.multi input[type=checkbox] { margin-top: 5px; }
.g4 { margin-top: 4px; padding: 11px 0 7px 125px; display: flex; gap: 33px; }
.tile { width: 192px; height: 57px; border: 1px solid #acacac; display: flex; align-items: center; gap: 7px; padding-left: 11px; }
.tile.wide { width: 219px; }
.tile svg { width: 48px; height: 48px; }
.dlg-foot { display: flex; justify-content: flex-end; gap: 8px; margin-top: 8px; margin-right: -1px; }
.dlg-foot .btn { width: 73px; height: 21px; }
.dlg-foot .ok { border-color: #3399ff; }
```
